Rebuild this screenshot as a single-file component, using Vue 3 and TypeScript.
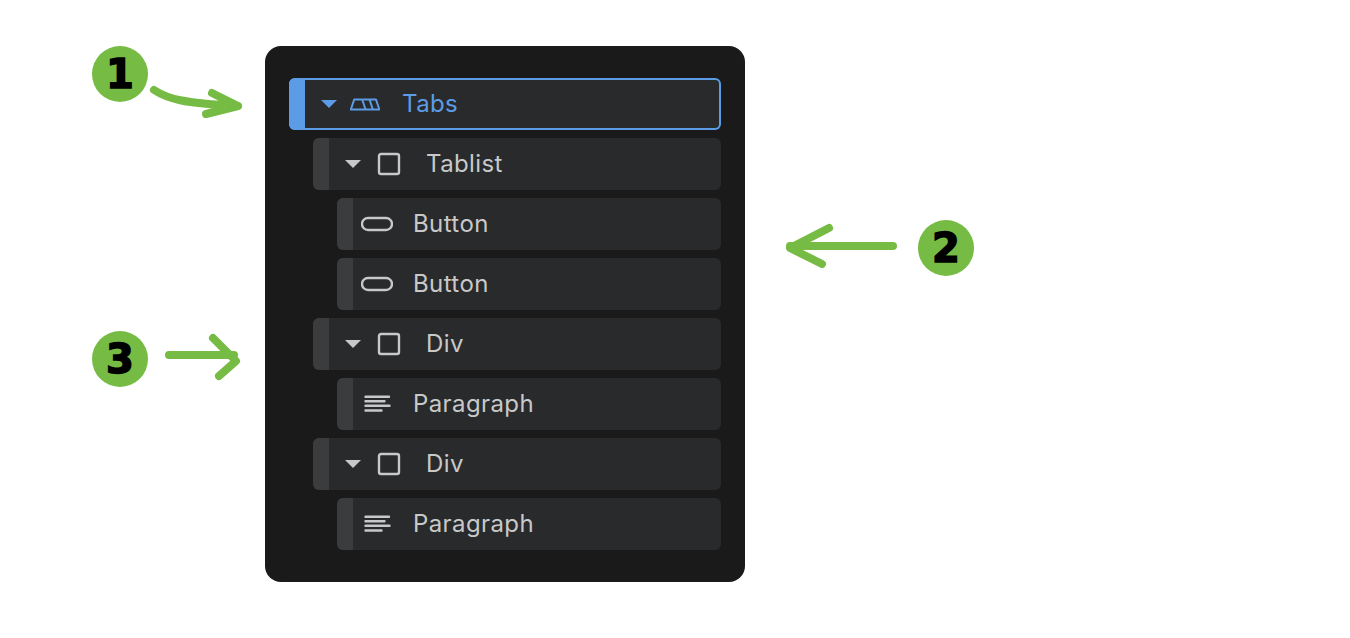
<script setup lang="ts">
type Icon = 'tabs' | 'box' | 'pill' | 'text'

interface Item {
  label: string
  icon: Icon
  depth: number
  caret?: boolean
  active?: boolean
}

const items: Item[] = [
  { label: 'Tabs', icon: 'tabs', depth: 0, caret: true, active: true },
  { label: 'Tablist', icon: 'box', depth: 1, caret: true },
  { label: 'Button', icon: 'pill', depth: 2 },
  { label: 'Button', icon: 'pill', depth: 2 },
  { label: 'Div', icon: 'box', depth: 1, caret: true },
  { label: 'Paragraph', icon: 'text', depth: 2 },
  { label: 'Div', icon: 'box', depth: 1, caret: true },
  { label: 'Paragraph', icon: 'text', depth: 2 },
]
</script>

<template>
  <div class="page">
    <div class="panel">
      <div
        v-for="(item, i) in items"
        :key="i"
        class="row"
        :class="['depth-' + item.depth, { active: item.active }]"
      >
        <span class="bar"></span>
        <svg v-if="item.caret" class="caret" width="16" height="8" viewBox="0 0 16 8">
          <path d="M0 0H16L8 8Z" fill="currentColor" />
        </svg>
        <svg class="icon" :class="{ nested: !item.caret }" width="32" height="24" viewBox="0 0 32 24" fill="none" stroke="currentColor">
          <template v-if="item.icon === 'tabs'">
            <path d="M1 17.5H31" stroke-width="2" />
            <path d="M2 17L5.2 7.5H13.2L16.4 17" stroke-width="2" stroke-linejoin="round" />
            <path d="M14 7.5H20.5L23.7 17M21 7.5H27L30.2 17" stroke-width="2" stroke-linejoin="round" />
          </template>
          <rect v-else-if="item.icon === 'box'" x="6" y="2" width="20" height="20" rx="2" stroke-width="2.4" />
          <rect v-else-if="item.icon === 'pill'" x="1" y="6" width="30" height="12" rx="6" stroke-width="2.4" />
          <g v-else stroke-width="2.4" stroke-linecap="round">
            <path d="M4.5 4.8H28M4.5 9.3H23.5M4.5 13.8H28.5M4.5 18.5H20.5" />
          </g>
        </svg>
        <span class="label">{{ item.label }}</span>
      </div>
    </div>

    <span class="badge badge-1">1</span>
    <span class="badge badge-2">2</span>
    <span class="badge badge-3">3</span>

    <svg class="arrows" width="1350" height="638" viewBox="0 0 1350 638" fill="none">
      <path d="M154 90C168 99 182 103 238 106M212 93L238 106L206 114" />
      <path d="M893 246H790M829 228L790 248L822 264" />
      <path d="M169 355H234M213 338L236 361L219 376" />
    </svg>
  </div>
</template>

<style>
html,
body {
  background: #fff;
}
</style>

<style scoped>
.page {
  position: relative;
  width: 1350px;
  height: 638px;
  padding: 46px 0 0 265px;
  box-sizing: border-box;
  background: #fff;
  overflow: hidden;
}
.panel {
  width: 480px;
  height: 536px;
  box-sizing: border-box;
  padding: 32px 24px;
  display: flex;
  flex-direction: column;
  align-items: flex-end;
  gap: 8px;
  background: #1a1a1a;
  border-radius: 16px;
}
.row {
  height: 52px;
  display: flex;
  align-items: center;
  box-sizing: border-box;
  background: #292a2c;
  border-radius: 6px;
  color: #c8c8c8;
  overflow: hidden;
}
.depth-0 { width: 432px; }
.depth-1 { width: 408px; }
.depth-2 { width: 384px; }
.bar {
  width: 16px;
  height: 100%;
  flex-shrink: 0;
  background: #3a3c3e;
}
.caret {
  margin-left: 16px;
  flex-shrink: 0;
}
.icon {
  margin-left: 12px;
  margin-right: 21px;
  flex-shrink: 0;
}
.icon.nested {
  margin-left: 8px;
  margin-right: 20px;
}
.label {
  font-family: Inter, "Liberation Sans", sans-serif;
  font-size: 24px;
  letter-spacing: 0.4px;
  line-height: 28px;
}
.row.active {
  color: #5c9ce6;
  box-shadow: inset 0 0 0 2px #5c9ce6;
}
.row.active .bar {
  background: #5c9ce6;
}
.badge {
  position: absolute;
  width: 56px;
  height: 56px;
  display: flex;
  align-items: center;
  justify-content: center;
  border-radius: 50%;
  background: #76bb44;
  color: #000;
  font-family: "DejaVu Sans", sans-serif;
  font-weight: 700;
  font-size: 40px;
  line-height: 1;
  -webkit-text-stroke: 1.5px #000;
}
.badge-1 { left: 92px; top: 46px; }
.badge-2 { left: 918px; top: 220px; }
.badge-3 { left: 92px; top: 331px; }
.arrows {
  position: absolute;
  left: 0;
  top: 0;
  pointer-events: none;
}
.arrows path {
  stroke: #76bb44;
  stroke-width: 8;
  stroke-linecap: round;
  stroke-linejoin: round;
}
</style>
